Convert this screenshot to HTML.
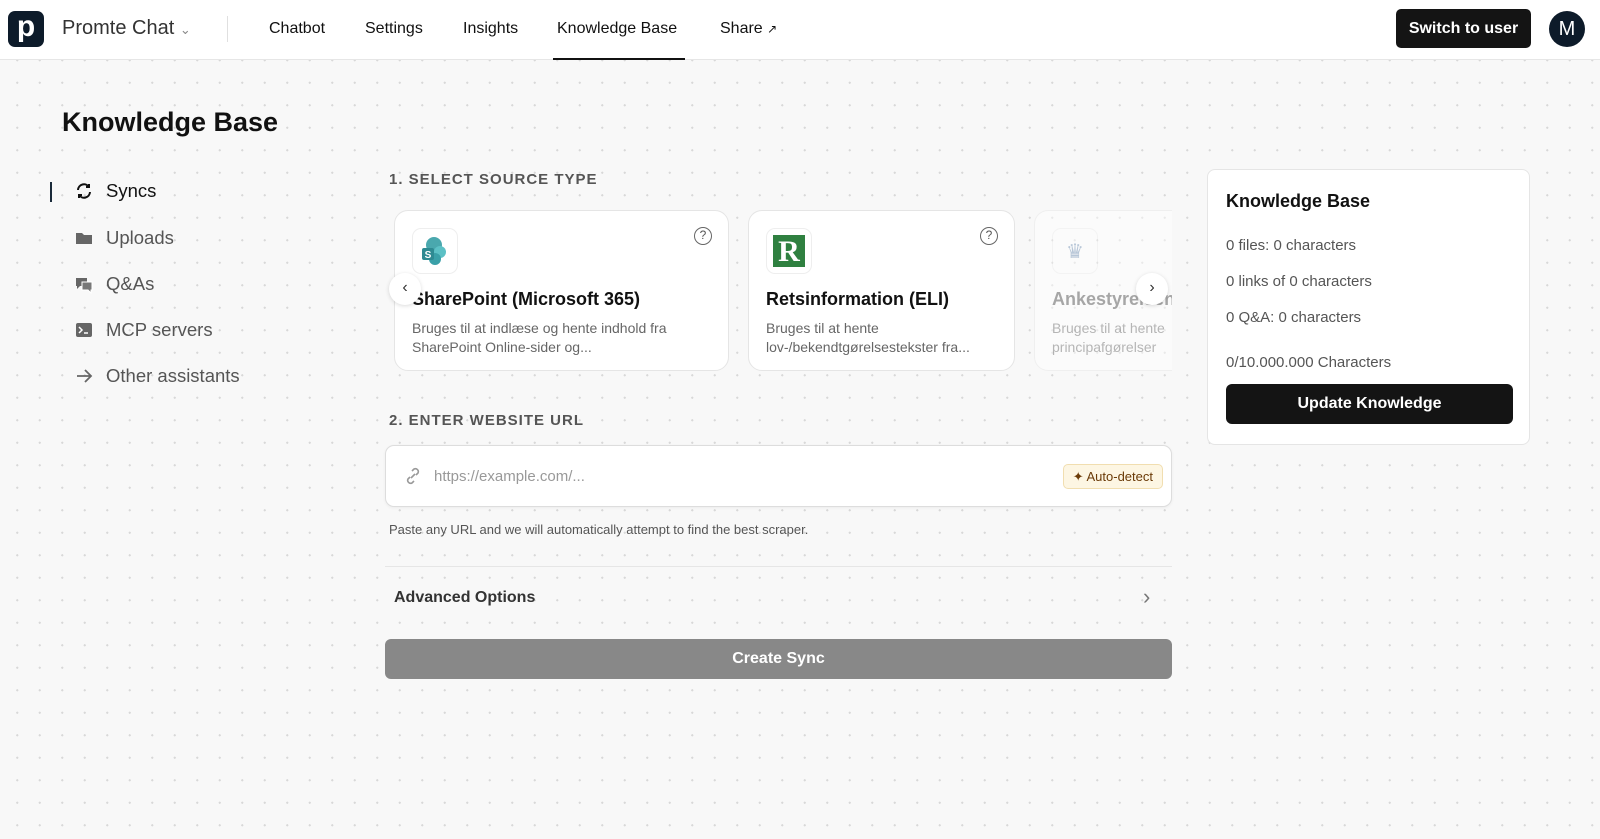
<!DOCTYPE html>
<html><head><meta charset="utf-8"><style>
*{box-sizing:border-box;margin:0;padding:0}
body{width:1600px;height:839px;overflow:hidden;font-family:"Liberation Sans",sans-serif;background:#f8f8f8;background-image:radial-gradient(circle,#d8d8d8 1px,transparent 1.2px);background-size:22.5px 22.5px;background-position:6px 4px;position:relative;color:#111}
.top{position:absolute;left:0;top:0;width:1600px;height:60px;background:#fff;border-bottom:1px solid #e6e6e6}
.logo{position:absolute;left:8px;top:11px;width:36px;height:36px;border-radius:7px;background:#0d1b2a;color:#fff;font-size:30px;font-weight:bold;text-align:center;line-height:32px}
.brand{position:absolute;left:62px;top:17px;font-size:20px;color:#333}
.sep{position:absolute;left:227px;top:16px;width:1px;height:26px;background:#e0e0e0}
.nav{position:absolute;top:20px;font-size:16px;color:#111}
.ul{position:absolute;left:553px;top:58px;width:132px;height:2px;background:#111}
.sw{position:absolute;left:1396px;top:9px;width:135px;height:39px;background:#141414;border-radius:5px;color:#fff;font-weight:bold;font-size:16px;text-align:center;line-height:39px}
.av{position:absolute;left:1549px;top:11px;width:36px;height:36px;border-radius:50%;background:#0d1b2a;color:#fff;font-size:20px;text-align:center;line-height:36px}
h1{position:absolute;left:62px;top:107px;font-size:27px;font-weight:bold;color:#111}
.side{position:absolute;left:74px;font-size:18.5px;color:#555;display:flex;align-items:center}
.side svg{margin-right:12px}
.lbl{position:absolute;left:389px;font-size:15px;font-weight:bold;color:#555;letter-spacing:1px}
.card{position:absolute;top:210px;height:161px;background:#fff;border:1px solid #e5e5e5;border-radius:14px}
.ic{position:absolute;left:17px;top:17px;width:46px;height:46px;border:1px solid #eee;border-radius:9px;display:flex;align-items:center;justify-content:center}
.ct{position:absolute;left:17px;top:78px;font-size:18px;font-weight:bold;color:#111;white-space:nowrap}
.cd{position:absolute;left:17px;top:108px;font-size:14px;color:#666;line-height:19px;white-space:nowrap}
.q{position:absolute;right:16px;top:16px;width:18px;height:18px;border:1.5px solid #666;border-radius:50%;font-size:12px;text-align:center;line-height:15px;color:#555}
.arr{position:absolute;top:273px;width:32px;height:32px;border-radius:50%;background:#fff;box-shadow:0 1px 4px rgba(0,0,0,.15);text-align:center;line-height:30px;font-size:16px;color:#333}
.url{position:absolute;left:385px;top:445px;width:787px;height:62px;background:#fff;border:1px solid #ddd;border-radius:9px;box-shadow:0 1px 3px rgba(0,0,0,.05)}
.ad{position:absolute;right:8px;top:18px;height:25px;padding:0 9px;background:#fdf6e3;border:1px solid #f1deb0;border-radius:5px;font-size:13px;color:#6b3b08;line-height:23px}
.kb{position:absolute;left:1207px;top:169px;width:323px;height:276px;background:#fff;border:1px solid #e5e5e5;border-radius:8px}
.kb div{position:absolute;left:18px;font-size:15px;color:#555}
</style></head><body>
<div class="top">
<div class="logo">p</div>
<div class="brand">Promte Chat <span style="font-size:13px;color:#888">&#8964;</span></div>
<div class="sep"></div>
<div class="nav" style="left:269px">Chatbot</div>
<div class="nav" style="left:365px">Settings</div>
<div class="nav" style="left:463px">Insights</div>
<div class="nav" style="left:557px">Knowledge Base</div>
<div class="nav" style="left:720px">Share <span style="font-size:12px">&#8599;</span></div>
<div class="ul"></div>
<div class="sw">Switch to user</div>
<div class="av">M</div>
</div>
<h1>Knowledge Base</h1>
<div style="position:absolute;left:50px;top:182px;width:2px;height:20px;background:#1a2a3a"></div>
<div class="side" style="top:180px;color:#111"><svg width="20" height="20" viewBox="0 0 20 20" fill="none" stroke="#111" stroke-width="2"><path d="M4 9a6 6 0 0 1 11-3M16 11a6 6 0 0 1-11 3M15 3v3h-3M5 17v-3h3"/></svg>Syncs</div>
<div class="side" style="top:227px"><svg width="20" height="20" viewBox="0 0 20 20"><path d="M2 5h6l2 2h8v9H2z" fill="#666"/></svg>Uploads</div>
<div class="side" style="top:273px"><svg width="20" height="20" viewBox="0 0 20 20"><path d="M2 4h11v8H6l-3 3v-3H2z" fill="#666"/><path d="M8 8h10v8h-1v3l-3-3H8z" fill="#777" stroke="#fff" stroke-width="1"/></svg>Q&amp;As</div>
<div class="side" style="top:319px"><svg width="20" height="20" viewBox="0 0 20 20"><rect x="2" y="3" width="16" height="14" rx="2" fill="#666"/><path d="M5 7l3 3-3 3M10 13h4" stroke="#fff" stroke-width="1.5" fill="none"/></svg>MCP servers</div>
<div class="side" style="top:365px"><svg width="20" height="20" viewBox="0 0 20 20" fill="none" stroke="#666" stroke-width="1.8"><path d="M3 10h14M11 4l6 6-6 6"/></svg>Other assistants</div>

<div class="lbl" style="top:171px">1. SELECT SOURCE TYPE</div>
<div class="card" style="left:394px;width:335px">
<div class="ic"><svg width="34" height="34" viewBox="0 0 34 34"><circle cx="16" cy="11" r="8" fill="#4aa8ae"/><circle cx="22" cy="18" r="6" fill="#5cc0c5"/><circle cx="17" cy="25" r="6" fill="#3aa0a8"/><rect x="4" y="14" width="12" height="12" rx="2" fill="#2e8a92"/><text x="10" y="24" font-size="10" fill="#fff" text-anchor="middle" font-weight="bold" font-family="Liberation Sans">S</text></svg></div>
<div class="q">?</div>
<div class="ct">SharePoint (Microsoft 365)</div>
<div class="cd">Bruges til at indlæse og hente indhold fra<br>SharePoint Online-sider og...</div>
</div>
<div class="card" style="left:748px;width:267px">
<div class="ic"><div style="width:32px;height:32px;background:#2f8040;color:#fff;font-family:'Liberation Serif',serif;font-weight:bold;font-size:30px;text-align:center;line-height:33px">R</div></div>
<div class="q">?</div>
<div class="ct">Retsinformation (ELI)</div>
<div class="cd">Bruges til at hente<br>lov-/bekendtgørelsestekster fra...</div>
</div>
<div class="card" style="left:1034px;opacity:.45;border-right:none;border-radius:14px 0 0 14px;overflow:hidden;width:138px">
<div class="ic" style="color:#6a8ab0;font-size:20px">♛</div>
<div class="ct" style="color:#444">Ankestyrelsen</div>
<div class="cd">Bruges til at hente<br>principafgørelser</div>
</div>
<div class="arr" style="left:389px">‹</div>
<div class="arr" style="left:1136px">›</div>

<div class="lbl" style="top:412px">2. ENTER WEBSITE URL</div>
<div class="url">
<svg style="position:absolute;left:17px;top:20px" width="20" height="20" viewBox="0 0 20 20" fill="none" stroke="#999" stroke-width="1.6"><path d="M8 12l4-4M9 5l2-2a3 3 0 0 1 4 4l-2 2M11 15l-2 2a3 3 0 0 1-4-4l2-2"/></svg>
<div style="position:absolute;left:48px;top:22px;font-size:15px;color:#999">https://example.com/...</div>
<div class="ad">✦ Auto-detect</div>
</div>
<div style="position:absolute;left:389px;top:522px;font-size:13px;color:#555">Paste any URL and we will automatically attempt to find the best scraper.</div>
<div style="position:absolute;left:385px;top:566px;width:787px;height:1px;background:#e6e6e6"></div>
<div style="position:absolute;left:394px;top:589px;font-size:16px;font-weight:bold;color:#333">Advanced Options</div>
<div style="position:absolute;left:1143px;top:584px;font-size:22px;color:#777">›</div>
<div style="position:absolute;left:385px;top:639px;width:787px;height:40px;background:#888;border-radius:6px;color:#fff;font-weight:bold;font-size:16px;text-align:center;line-height:40px">Create Sync</div>

<div class="kb">
<div style="top:21px;font-size:18px;font-weight:bold;color:#111">Knowledge Base</div>
<div style="top:67px">0 files: 0 characters</div>
<div style="top:103px">0 links of 0 characters</div>
<div style="top:139px">0 Q&amp;A: 0 characters</div>
<div style="top:184px">0/10.000.000 Characters</div>
<div style="top:214px;width:287px;height:40px;background:#141414;border-radius:6px;color:#fff;font-weight:bold;font-size:16px;text-align:center;line-height:40px">Update Knowledge</div>
</div>
</body></html>
